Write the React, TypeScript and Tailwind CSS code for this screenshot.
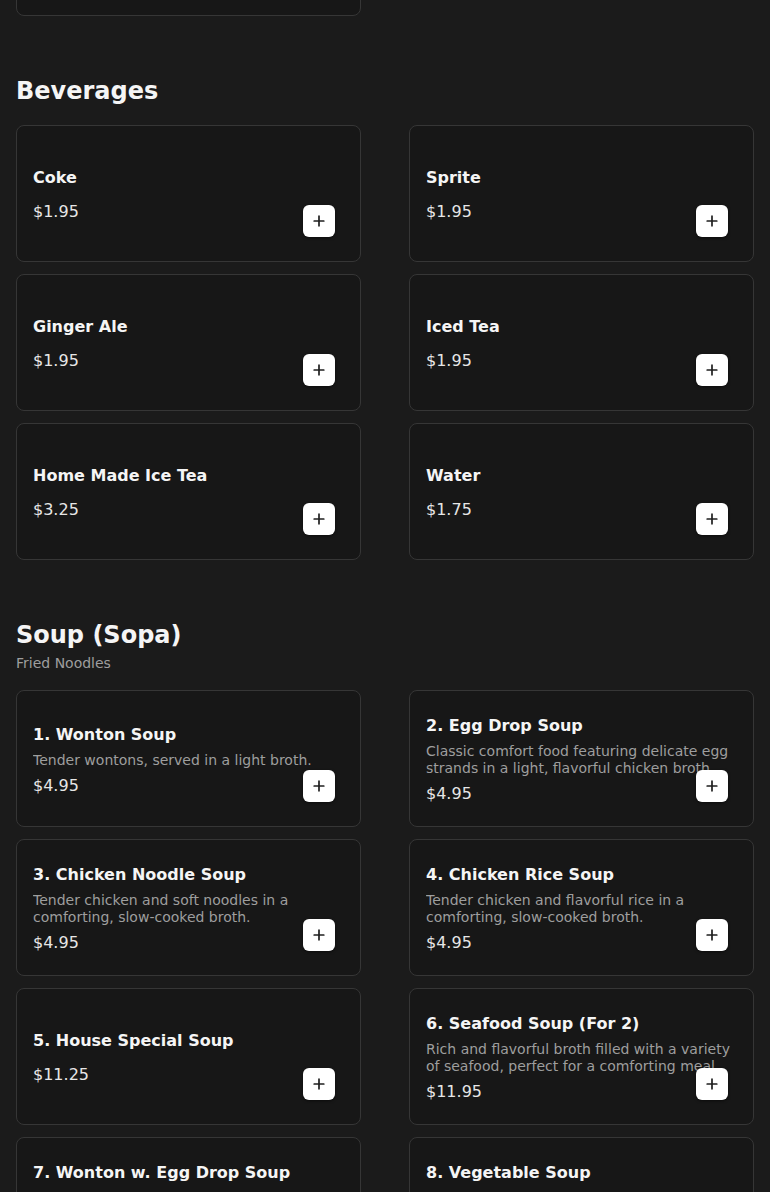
import React from "react";

type Item = { name: string; price: string; desc?: string };

const beverages: Item[] = [
  { name: "Coke", price: "$1.95" },
  { name: "Sprite", price: "$1.95" },
  { name: "Ginger Ale", price: "$1.95" },
  { name: "Iced Tea", price: "$1.95" },
  { name: "Home Made Ice Tea", price: "$3.25" },
  { name: "Water", price: "$1.75" },
];

const soups: Item[] = [
  { name: "1. Wonton Soup", price: "$4.95", desc: "Tender wontons, served in a light broth." },
  {
    name: "2. Egg Drop Soup",
    price: "$4.95",
    desc: "Classic comfort food featuring delicate egg strands in a light, flavorful chicken broth.",
  },
  {
    name: "3. Chicken Noodle Soup",
    price: "$4.95",
    desc: "Tender chicken and soft noodles in a comforting, slow-cooked broth.",
  },
  {
    name: "4. Chicken Rice Soup",
    price: "$4.95",
    desc: "Tender chicken and flavorful rice in a comforting, slow-cooked broth.",
  },
  { name: "5. House Special Soup", price: "$11.25" },
  {
    name: "6. Seafood Soup (For 2)",
    price: "$11.95",
    desc: "Rich and flavorful broth filled with a variety of seafood, perfect for a comforting meal.",
  },
  {
    name: "7. Wonton w. Egg Drop Soup",
    price: "$5.95",
    desc: "Tender wontons served in a silky egg drop broth, a perfect pairing.",
  },
  {
    name: "8. Vegetable Soup",
    price: "$4.95",
    desc: "Fresh seasonal vegetables simmered in a light, savory vegetable broth.",
  },
];

function PlusIcon() {
  return (
    <svg width="12" height="12" viewBox="0 0 12 12" fill="none">
      <path d="M6 1.2V10.8M1.2 6H10.8" stroke="#1f1f1f" strokeWidth="1.7" strokeLinecap="round" />
    </svg>
  );
}

function Card({ item }: { item: Item }) {
  return (
    <div className="relative flex h-[137px] flex-col justify-center gap-[5px] rounded-lg border border-[#363636] bg-[#171717] px-4 pt-[3px]">
      <div className="text-[16px] font-bold leading-6 text-[#f5f5f5]">{item.name}</div>
      <div className="line-clamp-2 text-[14px] leading-[17px] text-[#9e9e9e]">{item.desc ?? ""}</div>
      <div className="text-[16px] leading-6 text-[#e6e6e6]">{item.price}</div>
      <button className="absolute bottom-6 right-[25px] flex h-8 w-8 items-center justify-center rounded-md bg-white shadow-[0_1px_3px_rgba(0,0,0,0.5)]">
        <PlusIcon />
      </button>
    </div>
  );
}

function Section({ title, subtitle, items }: { title: string; subtitle?: string; items: Item[] }) {
  return (
    <section className="flex flex-col">
      <div className="mb-[18px] flex flex-col">
        <h2 className="pt-px text-[24px] font-bold leading-8 text-[#f5f5f5]">{title}</h2>
        {subtitle && <p className="mb-[-1px] mt-[2px] text-[14px] leading-5 text-[#9e9e9e]">{subtitle}</p>}
      </div>
      <div className="grid grid-cols-2 gap-x-12 gap-y-3">
        {items.map((it) => (
          <Card key={it.name} item={it} />
        ))}
      </div>
    </section>
  );
}

export default function App() {
  return (
    <div
      className="flex min-h-screen flex-col bg-[#1b1b1b] px-4 pb-10"
      style={{ fontFamily: '"DejaVu Sans", "Liberation Sans", sans-serif' }}
    >
      <div className="mt-[-121px] grid grid-cols-2 gap-x-12">
        <Card item={{ name: "Egg Foo Young", price: "$9.95" }} />
      </div>
      <div className="mt-[58px] flex flex-col gap-[58px]">
        <Section title="Beverages" items={beverages} />
        <Section title="Soup (Sopa)" subtitle="Fried Noodles" items={soups} />
      </div>
    </div>
  );
}
